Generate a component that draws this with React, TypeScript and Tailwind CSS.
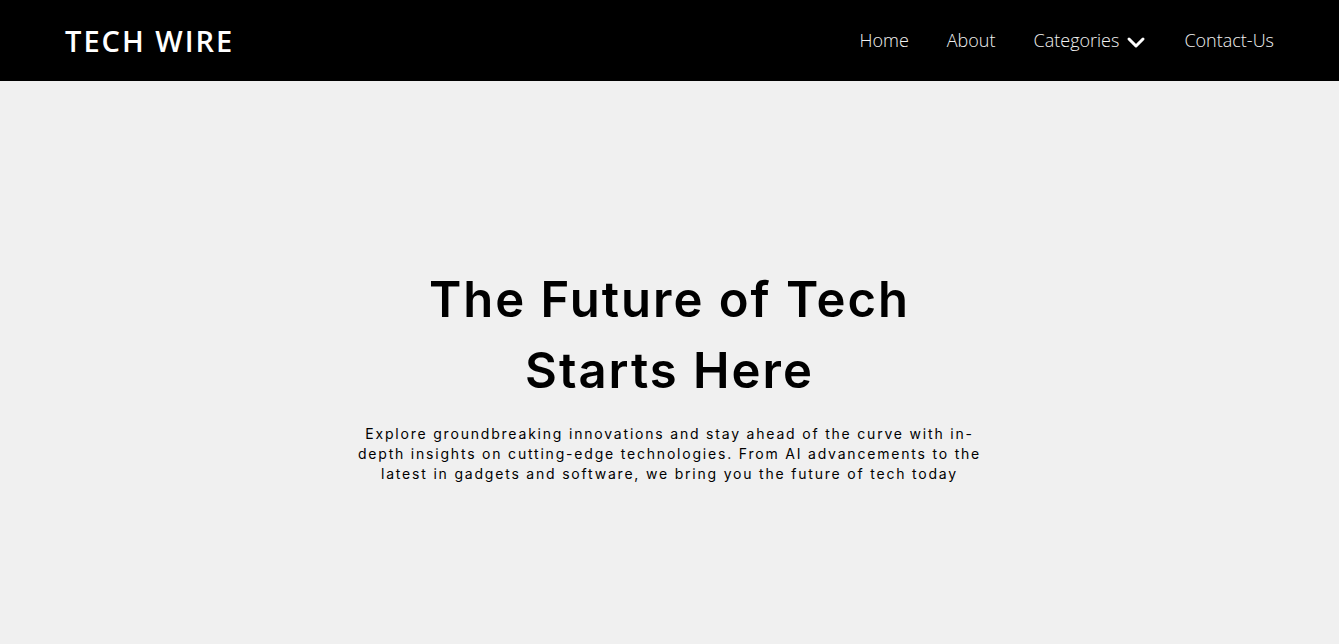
import React from "react";

export default function App() {
  return (
    <div className="min-h-[644px] w-full bg-[#f0f0f0]">
      <header className="flex h-[81px] items-center justify-between bg-black pl-[65px] pr-[65px]">
        <div className="text-[29px] font-semibold tracking-[2px] text-white" style={{ fontFamily: '"Open Sans", sans-serif' }}>
          TECH WIRE
        </div>
        <nav className="flex items-center gap-[38px] text-[18px] text-[#f2f2f2]" style={{ fontFamily: '"Open Sans", sans-serif' }}>
          <a className="font-light">Home</a>
          <a className="font-light">About</a>
          <a className="flex items-center gap-[7px] font-light">
            Categories
            <svg width="20" height="14" viewBox="0 0 20 14" className="mt-[3px]">
              <path d="M3 4 L10 11 L17 4" fill="none" stroke="white" strokeWidth="3" strokeLinecap="round" strokeLinejoin="round" />
            </svg>
          </a>
          <a className="font-light">Contact-Us</a>
        </nav>
      </header>
      <main className="flex flex-col items-center pt-[183px]" style={{ fontFamily: 'Inter, "Noto Sans", sans-serif' }}>
        <h1 className="text-center text-[49px] font-semibold leading-[71px] tracking-[2px] text-black">
          The Future of Tech
          <br />
          Starts Here
        </h1>
        <p className="mt-[18px] w-[636px] text-center text-[14px] leading-[20px] tracking-[1.8px] text-black">
          Explore groundbreaking innovations and stay ahead of the curve with in-depth insights on cutting-edge technologies. From AI advancements to the latest in gadgets and software, we bring you the future of tech today
        </p>
      </main>
    </div>
  );
}
